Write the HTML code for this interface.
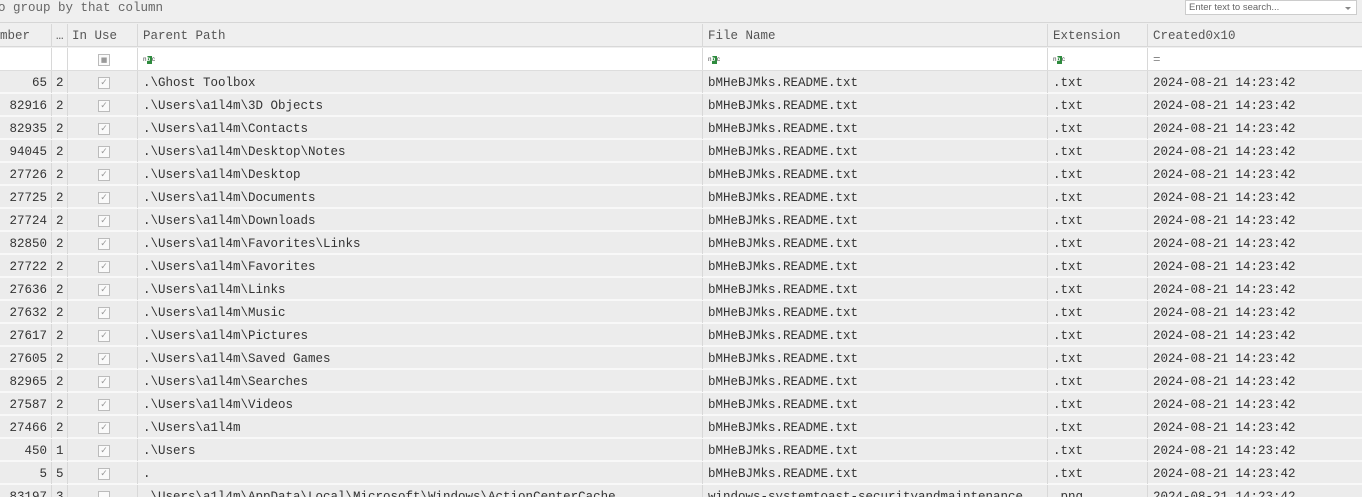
<!DOCTYPE html>
<html><head><meta charset="utf-8"><style>
*{margin:0;padding:0;box-sizing:border-box}
html,body{width:1362px;height:497px;overflow:hidden}
body{background:#efefef;font-family:"Liberation Mono",monospace;font-size:12.5px;color:#333;position:relative}
.top{position:absolute;left:0;top:0;width:1362px;height:23px;background:#efefef;border-bottom:1px solid #d6d6d6}
.top .g{position:absolute;left:-2px;top:0;line-height:17px;color:#666}
.search{position:absolute;left:1185px;top:0;width:172px;height:15px;background:#fff;border:1px solid #ccc;font-family:"Liberation Sans",sans-serif;font-size:9.5px;color:#666;padding-left:3px;line-height:13px}
.search:after{content:"";position:absolute;right:5px;top:6px;border:3px solid transparent;border-top:3px solid #888}
.row{position:absolute;left:0;width:1362px;height:23px;border-bottom:2px solid #f8f8f8;background:#ececec}
.row div{position:absolute;top:0;line-height:24px;white-space:nowrap;overflow:hidden}
.hdr{background:#efefef;top:24px;border-bottom:1px solid #d8d8d8;color:#555}
.flt{background:#fff;top:48px;border-bottom:1px solid #ddd}
.c0{left:0;width:52px;text-align:right;padding-right:4px;border-right:1px solid #d8d8d8;height:22px}
.c1{left:52px;width:16px;padding-left:4px;border-right:1px solid #d8d8d8;height:22px}
.c2{left:68px;width:70px;border-right:1px solid #d8d8d8;height:22px}
.c3{left:138px;width:565px;padding-left:5px;border-right:1px solid #d8d8d8;height:22px}
.c4{left:703px;width:345px;padding-left:5px;border-right:1px solid #d8d8d8;height:22px}
.c5{left:1048px;width:100px;padding-left:5px;border-right:1px solid #d8d8d8;height:22px}
.c6{left:1148px;width:214px;padding-left:5px;height:22px}
.cb{position:absolute;left:30px;top:6px;width:12px;height:12px;border:1px solid #bbb;background:#fafafa;font-size:9px;line-height:10px;text-align:center;color:#999;font-family:"DejaVu Sans",sans-serif}
.abc{display:inline-block;font-size:6px;line-height:8px;color:#333;margin-top:8px;vertical-align:top}
.abc b{display:inline-block;background:#2e8b3e;color:#fff;width:5px;height:8px}
</style></head><body>
<div class="top"><div class="g">o group by that column</div><div class="search">Enter text to search...</div></div>
<div class="row hdr"><div class="c0" style="text-align:left;padding-left:0">mber</div><div class="c1">…</div><div class="c2" style="padding-left:4px">In Use</div><div class="c3">Parent Path</div><div class="c4">File Name</div><div class="c5">Extension</div><div class="c6">Created0x10</div></div>
<div class="row flt"><div class="c0"></div><div class="c1"></div><div class="c2"><span class="cb" style="font-size:7px">■</span></div><div class="c3"><span class="abc">n<b>b</b>c</span></div><div class="c4"><span class="abc">n<b>b</b>c</span></div><div class="c5"><span class="abc">n<b>b</b>c</span></div><div class="c6" style="color:#888">=</div></div>
<div class="row" style="top:71px"><div class="c0">65</div><div class="c1">2</div><div class="c2"><span class="cb">✓</span></div><div class="c3">.\Ghost Toolbox</div><div class="c4">bMHeBJMks.README.txt</div><div class="c5">.txt</div><div class="c6">2024-08-21 14:23:42</div></div>
<div class="row" style="top:94px"><div class="c0">82916</div><div class="c1">2</div><div class="c2"><span class="cb">✓</span></div><div class="c3">.\Users\a1l4m\3D Objects</div><div class="c4">bMHeBJMks.README.txt</div><div class="c5">.txt</div><div class="c6">2024-08-21 14:23:42</div></div>
<div class="row" style="top:117px"><div class="c0">82935</div><div class="c1">2</div><div class="c2"><span class="cb">✓</span></div><div class="c3">.\Users\a1l4m\Contacts</div><div class="c4">bMHeBJMks.README.txt</div><div class="c5">.txt</div><div class="c6">2024-08-21 14:23:42</div></div>
<div class="row" style="top:140px"><div class="c0">94045</div><div class="c1">2</div><div class="c2"><span class="cb">✓</span></div><div class="c3">.\Users\a1l4m\Desktop\Notes</div><div class="c4">bMHeBJMks.README.txt</div><div class="c5">.txt</div><div class="c6">2024-08-21 14:23:42</div></div>
<div class="row" style="top:163px"><div class="c0">27726</div><div class="c1">2</div><div class="c2"><span class="cb">✓</span></div><div class="c3">.\Users\a1l4m\Desktop</div><div class="c4">bMHeBJMks.README.txt</div><div class="c5">.txt</div><div class="c6">2024-08-21 14:23:42</div></div>
<div class="row" style="top:186px"><div class="c0">27725</div><div class="c1">2</div><div class="c2"><span class="cb">✓</span></div><div class="c3">.\Users\a1l4m\Documents</div><div class="c4">bMHeBJMks.README.txt</div><div class="c5">.txt</div><div class="c6">2024-08-21 14:23:42</div></div>
<div class="row" style="top:209px"><div class="c0">27724</div><div class="c1">2</div><div class="c2"><span class="cb">✓</span></div><div class="c3">.\Users\a1l4m\Downloads</div><div class="c4">bMHeBJMks.README.txt</div><div class="c5">.txt</div><div class="c6">2024-08-21 14:23:42</div></div>
<div class="row" style="top:232px"><div class="c0">82850</div><div class="c1">2</div><div class="c2"><span class="cb">✓</span></div><div class="c3">.\Users\a1l4m\Favorites\Links</div><div class="c4">bMHeBJMks.README.txt</div><div class="c5">.txt</div><div class="c6">2024-08-21 14:23:42</div></div>
<div class="row" style="top:255px"><div class="c0">27722</div><div class="c1">2</div><div class="c2"><span class="cb">✓</span></div><div class="c3">.\Users\a1l4m\Favorites</div><div class="c4">bMHeBJMks.README.txt</div><div class="c5">.txt</div><div class="c6">2024-08-21 14:23:42</div></div>
<div class="row" style="top:278px"><div class="c0">27636</div><div class="c1">2</div><div class="c2"><span class="cb">✓</span></div><div class="c3">.\Users\a1l4m\Links</div><div class="c4">bMHeBJMks.README.txt</div><div class="c5">.txt</div><div class="c6">2024-08-21 14:23:42</div></div>
<div class="row" style="top:301px"><div class="c0">27632</div><div class="c1">2</div><div class="c2"><span class="cb">✓</span></div><div class="c3">.\Users\a1l4m\Music</div><div class="c4">bMHeBJMks.README.txt</div><div class="c5">.txt</div><div class="c6">2024-08-21 14:23:42</div></div>
<div class="row" style="top:324px"><div class="c0">27617</div><div class="c1">2</div><div class="c2"><span class="cb">✓</span></div><div class="c3">.\Users\a1l4m\Pictures</div><div class="c4">bMHeBJMks.README.txt</div><div class="c5">.txt</div><div class="c6">2024-08-21 14:23:42</div></div>
<div class="row" style="top:347px"><div class="c0">27605</div><div class="c1">2</div><div class="c2"><span class="cb">✓</span></div><div class="c3">.\Users\a1l4m\Saved Games</div><div class="c4">bMHeBJMks.README.txt</div><div class="c5">.txt</div><div class="c6">2024-08-21 14:23:42</div></div>
<div class="row" style="top:370px"><div class="c0">82965</div><div class="c1">2</div><div class="c2"><span class="cb">✓</span></div><div class="c3">.\Users\a1l4m\Searches</div><div class="c4">bMHeBJMks.README.txt</div><div class="c5">.txt</div><div class="c6">2024-08-21 14:23:42</div></div>
<div class="row" style="top:393px"><div class="c0">27587</div><div class="c1">2</div><div class="c2"><span class="cb">✓</span></div><div class="c3">.\Users\a1l4m\Videos</div><div class="c4">bMHeBJMks.README.txt</div><div class="c5">.txt</div><div class="c6">2024-08-21 14:23:42</div></div>
<div class="row" style="top:416px"><div class="c0">27466</div><div class="c1">2</div><div class="c2"><span class="cb">✓</span></div><div class="c3">.\Users\a1l4m</div><div class="c4">bMHeBJMks.README.txt</div><div class="c5">.txt</div><div class="c6">2024-08-21 14:23:42</div></div>
<div class="row" style="top:439px"><div class="c0">450</div><div class="c1">1</div><div class="c2"><span class="cb">✓</span></div><div class="c3">.\Users</div><div class="c4">bMHeBJMks.README.txt</div><div class="c5">.txt</div><div class="c6">2024-08-21 14:23:42</div></div>
<div class="row" style="top:462px"><div class="c0">5</div><div class="c1">5</div><div class="c2"><span class="cb">✓</span></div><div class="c3">.</div><div class="c4">bMHeBJMks.README.txt</div><div class="c5">.txt</div><div class="c6">2024-08-21 14:23:42</div></div>
<div class="row" style="top:485px"><div class="c0">83197</div><div class="c1">3</div><div class="c2"><span class="cb"></span></div><div class="c3">.\Users\a1l4m\AppData\Local\Microsoft\Windows\ActionCenterCache</div><div class="c4">windows-systemtoast-securityandmaintenance</div><div class="c5">.png</div><div class="c6">2024-08-21 14:23:42</div></div>
</body></html>
